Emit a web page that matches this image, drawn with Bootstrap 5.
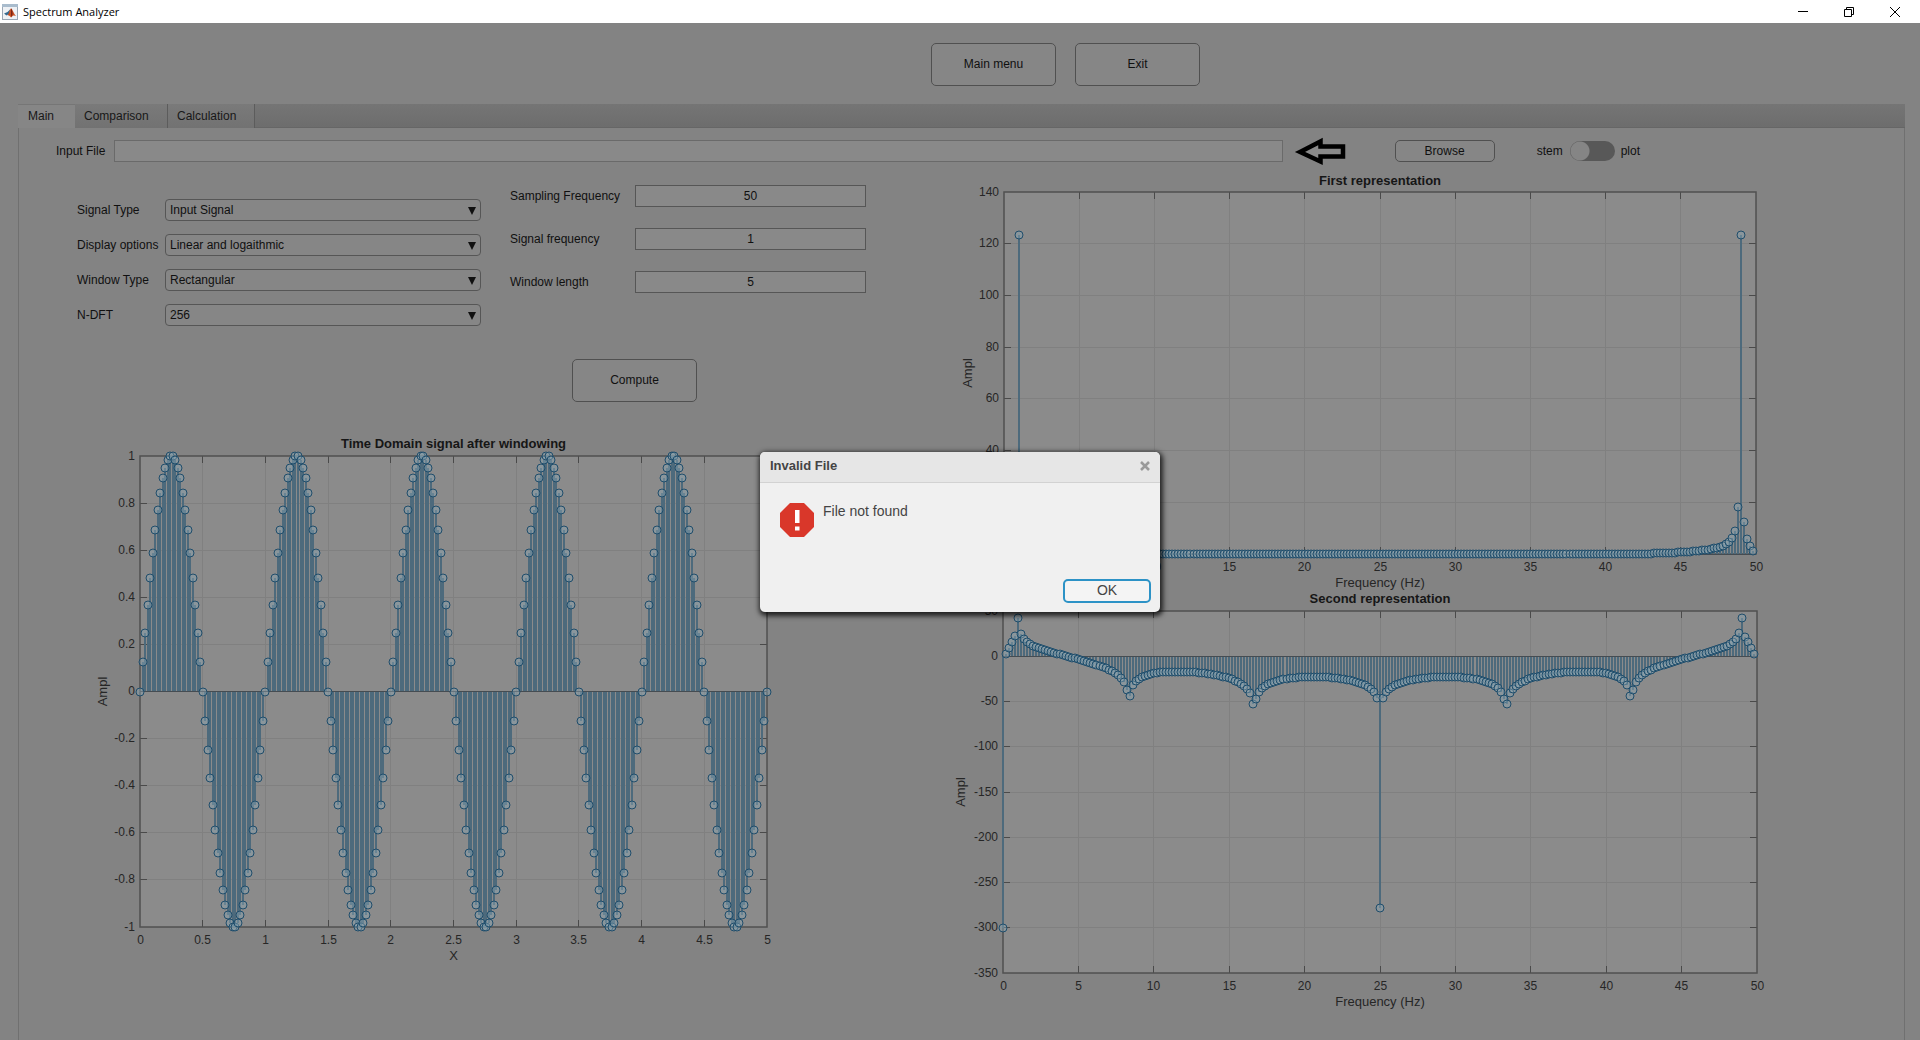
<!DOCTYPE html>
<html lang="en">
<head>
<meta charset="utf-8">
<meta name="viewport" content="width=device-width, initial-scale=1">
<title>Spectrum Analyzer</title>
<link href="https://cdn.jsdelivr.net/npm/bootstrap@5.3.0/dist/css/bootstrap.min.css" rel="stylesheet">
<style>
  body { background: #838383; color: #101010; font-family: "Liberation Sans", Arial, sans-serif; font-size: 12px; line-height: 16px; }
  .title-bar { height: 23px; background: #fff; color: #000; font-family: "Open Sans", "Noto Sans", sans-serif; font-size: 11px; padding-left: 2px; padding-right: 19px; }
  .title-bar span { padding-left: 5px; }
  .win-btns { gap: 34px; }
  .win-btns button { width: 12px; height: 12px; padding: 0; border: 0; background: none; line-height: 0; }
  .top-actions { padding: 20px 0 18px 931px; gap: 19px; }
  .app-btn { background: #868686; border: 1px solid #505050; border-radius: 5px; color: #101010; font-size: 12px; line-height: 16px; padding: 0; }
  .app-btn.big { width: 125px; height: 43px; padding-bottom: 2px; }
  .app-btn.slim { width: 100px; height: 22px; }
  .tab-frame { margin: 0 15px 0 18px; border: 1px solid #707070; border-top: 0; border-bottom: 0; }
  .tab-strip { height: 24px; background: linear-gradient(#757575, #6d6d6d); border-bottom: 1px solid #666; margin: 0 -1px; }
  .tab-strip .nav-link { color: #181818; padding: 4px 0 0 9px; border: 0; border-right: 1px solid #5c5c5c; border-radius: 0; height: 24px; width: 87px; background: linear-gradient(#7a7a7a, #727272); }
  .tab-strip .nav-link.active { width: 57px; padding-left: 10px; background: #868686; color: #181818; border-top: 1px solid #767676; border-right: 0; padding-top: 3px; }
  .tab-strip .nav-link.wide { width: 93px; }
  .file-row { padding: 12px 264px 0 37px; }
  .file-row label { width: 58px; }
  .fld { height: 22px; background: #898989; border: 1px solid #565656; border-radius: 0; font-size: 12px; line-height: 16px; color: #101010; padding: 0 4px; min-width: 0; }
  .file-row .fld { border-color: #6a6a6a; }
  .pick { appearance: none; border-radius: 4px; background: #868686 url("data:image/svg+xml,%3Csvg xmlns='http://www.w3.org/2000/svg' width='8' height='8'%3E%3Cpath d='M0 0h8L4 8z' fill='%23101010'/%3E%3C/svg%3E") no-repeat right 4px top 7px; }
  .hint-arrow { margin: 0 49px 0 13px; flex: none; }
  .toggle { appearance: none; width: 45px; height: 20px; border-radius: 10px; margin: 0 6px 0 7px; background: radial-gradient(circle at 10px 10px, #858585 9px, transparent 10px), #585858; }
  .stem-lab { margin-left: 42px; }
  .panes { display: grid; grid-template-columns: minmax(0, 923fr) minmax(0, 962fr); }
  .params { padding: 0 76px 0 58px; gap: 29px; }
  .group-a { flex: 404 1 0; padding-top: 37px; gap: 13px; min-width: 0; }
  .group-b { flex: 356 1 0; padding-top: 23px; gap: 21px; min-width: 0; }
  .group-a label { width: 88px; flex: none; }
  .group-b label { width: 125px; flex: none; }
  .compute-row { padding: 33px 0 27px 553px; }
  .plot { display: block; width: 100%; }
  .plot.time { height: 540px; }
  .plot.first { height: 426px; margin-top: 3px; }
  .plot.second { height: 421px; }
  .plot text { font-size: 12px; fill: #262626; }
  .plot .axis-name { font-size: 13px; }
  .plot .head { font-size: 13px; font-weight: bold; fill: #161616; }
  .err-box { position: absolute; left: calc(50% - 200px); top: 452px; width: 400px; height: 160px; background: #f0f0f0; color: #444; border-radius: 5px; box-shadow: 1px 2px 5px 2px rgba(0,0,0,.75); }
  .err-head { height: 31px; background: #e6e6e6; border-bottom: 1px solid #d2d2d2; border-radius: 5px 5px 0 0; padding: 0 9px 2px 10px; font-size: 13px; font-weight: bold; }
  .err-head button { border: 0; background: none; padding: 0; line-height: 0; }
  .err-body { padding: 20px 9px 9px 20px; font-size: 14px; }
  .err-body p { margin: 0 0 0 9px; }
  .ok-btn { width: 88px; height: 24px; border: 2px solid #2c92c6; border-radius: 5px; background: #f4f4f4; color: #444; font-size: 14px; line-height: 16px; padding: 0 0 2px; }
</style>
</head>
<body class="position-relative min-vh-100 d-flex flex-column overflow-x-hidden">

<header class="title-bar d-flex align-items-center">
  <svg width="16" height="16" viewBox="0 0 16 16" aria-hidden="true">
    <rect x=".5" y=".5" width="15" height="15" fill="#eef1f5" stroke="#9aa7b5"/>
    <rect x="0" y="0" width="16" height="3" fill="#a9bccd"/>
    <path d="M2 9.500L5.500 8 8 5.500 7.500 11 5.500 10.800 4.500 11.600z" fill="#33698f"/>
    <path d="M5.500 11.200C7 10 8 4.500 9 4.500c1.300 0 2.500 5 5 7.500-2-1-3-1-5 1.500-.8-1.500-2-2.500-3.500-2.300z" fill="#c94f22"/>
    <path d="M9 4.500c.9.200 1.400 3 1.600 5.500L9 13.500z" fill="#7c2414"/>
  </svg>
  <span class="flex-grow-1">Spectrum Analyzer</span>
  <div class="win-btns d-flex">
    <button type="button" aria-label="Minimize"><svg width="12" height="12"><path d="M1 5.500h10" stroke="#000"/></svg></button>
    <button type="button" aria-label="Restore"><svg width="12" height="12" fill="none" stroke="#000"><path d="M1.500 3.500h7v7h-7zM3.500 3.500v-2h7v7h-2"/></svg></button>
    <button type="button" aria-label="Close"><svg width="12" height="12"><path d="M1 1l10 10M11 1L1 11" stroke="#000"/></svg></button>
  </div>
</header>

<div class="top-actions d-flex">
  <button type="button" class="btn app-btn big">Main menu</button>
  <button type="button" class="btn app-btn big">Exit</button>
</div>

<main class="tab-frame flex-grow-1">
  <nav class="tab-strip nav">
    <a class="nav-link active" href="#main">Main</a>
    <a class="nav-link wide" href="#comparison">Comparison</a>
    <a class="nav-link" href="#calculation">Calculation</a>
  </nav>

  <div class="file-row d-flex align-items-center" id="main">
    <label for="file">Input File</label>
    <input id="file" type="text" class="fld flex-grow-1">
    <svg class="hint-arrow" width="50" height="22" viewBox="0 2 50 22" overflow="visible" aria-hidden="true">
      <path d="M4 14L24.500 3.500V8.500H47V18.500H24.500V23.500z" fill="#8a8a8a" stroke="#000" stroke-width="4.500"/>
    </svg>
    <button type="button" class="btn app-btn slim">Browse</button>
    <label class="w-auto stem-lab" for="mode">stem</label>
    <input id="mode" type="checkbox" role="switch" class="toggle">
    <label class="w-auto" for="mode">plot</label>
  </div>

  <div class="panes">
    <section>
      <form class="params d-flex">
        <div class="group-a d-flex flex-column">
          <div class="d-flex align-items-center"><label for="sig">Signal Type</label><select id="sig" class="fld pick flex-grow-1"><option>Input Signal</option></select></div>
          <div class="d-flex align-items-center"><label for="disp">Display options</label><select id="disp" class="fld pick flex-grow-1"><option>Linear and logaithmic</option></select></div>
          <div class="d-flex align-items-center"><label for="win">Window Type</label><select id="win" class="fld pick flex-grow-1"><option>Rectangular</option></select></div>
          <div class="d-flex align-items-center"><label for="dft">N-DFT</label><select id="dft" class="fld pick flex-grow-1"><option>256</option></select></div>
        </div>
        <div class="group-b d-flex flex-column">
          <div class="d-flex align-items-center"><label for="fs">Sampling Frequency</label><input id="fs" type="text" class="fld flex-grow-1 text-center" value="50"></div>
          <div class="d-flex align-items-center"><label for="f0">Signal frequency</label><input id="f0" type="text" class="fld flex-grow-1 text-center" value="1"></div>
          <div class="d-flex align-items-center"><label for="len">Window length</label><input id="len" type="text" class="fld flex-grow-1 text-center" value="5"></div>
        </div>
      </form>
      <div class="compute-row"><button type="button" class="btn app-btn big">Compute</button></div>
      <svg class="plot time" id="timePlot" role="img" aria-label="Time Domain signal after windowing"></svg>
    </section>
    <section>
      <svg class="plot first" id="firstPlot" role="img" aria-label="First representation"></svg>
      <svg class="plot second" id="secondPlot" role="img" aria-label="Second representation"></svg>
    </section>
  </div>
</main>

<div class="err-box d-flex flex-column" role="alertdialog" aria-labelledby="errTitle">
  <div class="err-head d-flex align-items-center justify-content-between">
    <span id="errTitle">Invalid File</span>
    <button type="button" aria-label="Close dialog"><svg width="12" height="12"><path d="M2 2l8 8M10 2L2 10" stroke="#9a9a9a" stroke-width="2.500"/></svg></button>
  </div>
  <div class="err-body d-flex flex-column justify-content-between flex-grow-1">
    <div class="d-flex">
      <svg width="34" height="34" viewBox="0 0 34 34" aria-hidden="true">
        <path d="M10 0h14l10 10v14L24 34H10L0 24V10z" fill="#d9372a"/>
        <path d="M15 7h4.500v13H15zM15 23.500h4.500V27.500H15z" fill="#fff"/>
      </svg>
      <p>File not found</p>
    </div>
    <button type="button" class="btn ok-btn align-self-end">OK</button>
  </div>
</div>

<script src="https://cdn.jsdelivr.net/npm/bootstrap@5.3.0/dist/js/bootstrap.bundle.min.js"></script>
<script>
  // Sampled sine: 50 Hz sampling, 1 Hz tone, 5 s window
  const sine = Array.from({ length: 251 }, (_, n) => [n / 50, n % 25 ? Math.sin(2 * Math.PI * n / 50) : 0]);

  // Magnitude spectrum on 250 bins
  const spectrum = Array.from({ length: 250 }, (_, k) => {
    const f = k / 5, s = Math.sin(Math.PI * f / 50);
    if (k === 0) return [f, 1e-15];
    if (k === 5 || k === 245) return [f, 123.5];
    if (k === 125) return [f, 1.26e-14];
    const comb = Math.abs(Math.sin(6 * Math.PI * f / 50) / (6 * s));
    const s0 = Math.sin(Math.PI / 50);
    const leak = Math.abs(0.4 * s / (s * s - s0 * s0));
    const side = k === 244 ? 1.08 : k === 246 ? 0.88 : 1;
    return [f, comb * leak * side];
  });
  const decibels = spectrum.map(([f, m]) => [f, 20 * Math.log10(m)]);

  function draw(id, c) {
    const svg = document.getElementById(id), w = svg.clientWidth;
    const L = c.left, R = w - c.right, T = c.top, B = c.bottom;
    const X = v => L + (v - c.x[0]) / (c.x[1] - c.x[0]) * (R - L);
    const Y = v => B - (v - c.y[0]) / (c.y[1] - c.y[0]) * (B - T);
    let grid = '', tick = '', txt = '', stems = '', dots = '';
    const fmt = v => String(Math.round(v * 10) / 10);
    const nx = Math.round((c.x[1] - c.x[0]) / c.dx), ny = Math.round((c.y[1] - c.y[0]) / c.dy);
    for (let i = 0; i <= nx; i++) {
      const v = c.x[0] + i * c.dx, x = Math.floor(X(v)) + .5;
      if (i && i < nx) { grid += `M${x} ${T}V${B}`; tick += `M${x} ${T}v7M${x} ${B}v-7`; }
      txt += `<text x="${x}" y="${B + 17}" text-anchor="middle">${fmt(v)}</text>`;
    }
    for (let i = 0; i <= ny; i++) {
      const v = c.y[0] + i * c.dy, y = Math.floor(Y(v)) + .5;
      if (i && i < ny) { grid += `M${L} ${y}H${R}`; tick += `M${L} ${y}h7M${R} ${y}h-7`; }
      txt += `<text x="${L - 5}" y="${Math.floor(y) + 4}" text-anchor="end">${fmt(v)}</text>`;
    }
    const zero = Math.floor(Y(0) + .01);
    for (const [a, b] of c.data) {
      const x = Math.round(X(a)), y = Math.round(Y(b));
      stems += `M${x - 1} ${zero}h2V${y}h-2z`;
      dots += `<circle cx="${x}" cy="${y}" r="4"/>`;
    }
    const mid = (L + R) / 2;
    svg.innerHTML =
      `<rect x="${L}" y="${T}" width="${R - L}" height="${B - T}" fill="#8b8b8b"/>` +
      `<path d="${grid}" stroke="#808080"/>` +
      `<path d="${tick}" stroke="#4a4a4a" stroke-width="1"/>` +
      `<rect x="${L}" y="${T}" width="${R - L}" height="${B - T}" fill="none" stroke="#505050" stroke-width="1.5"/>` +
      `<path d="${stems}" fill="#4d6a7c" shape-rendering="crispEdges"/>` +
      `<path d="M${L} ${zero + .5}H${R}" stroke="#454c52"/>` +
      `<g fill="#8aa3b2" fill-opacity=".45" stroke="#1f4d6b">${dots}</g>` + txt +
      `<text class="head" x="${mid}" y="${c.headY}" text-anchor="middle">${c.title}</text>` +
      `<text class="axis-name" x="${mid}" y="${c.nameY}" text-anchor="middle">${c.xname}</text>` +
      `<text class="axis-name" transform="translate(${c.sideX} ${(T + B) / 2}) rotate(-90)" text-anchor="middle">Ampl</text>`;
  }

  function drawAll() {
    draw('timePlot', { left: 121, right: 175, top: 27, bottom: 498, x: [0, 5], dx: .5, y: [-1, 1], dy: .2, data: sine,
      title: 'Time Domain signal after windowing', headY: 19, xname: 'X', nameY: 531, sideX: 88 });
    draw('firstPlot', { left: 62, right: 148, top: 27, bottom: 389, x: [0, 50], dx: 5, y: [0, 140], dy: 20, data: spectrum,
      title: 'First representation', headY: 20, xname: 'Frequency (Hz)', nameY: 422, sideX: 30 });
    draw('secondPlot', { left: 61, right: 147, top: 20, bottom: 382, x: [0, 50], dx: 5, y: [-350, 50], dy: 50, data: decibels,
      title: 'Second representation', headY: 12, xname: 'Frequency (Hz)', nameY: 415, sideX: 23 });
  }
  drawAll();
  window.addEventListener('resize', drawAll);
</script>
</body>
</html>
